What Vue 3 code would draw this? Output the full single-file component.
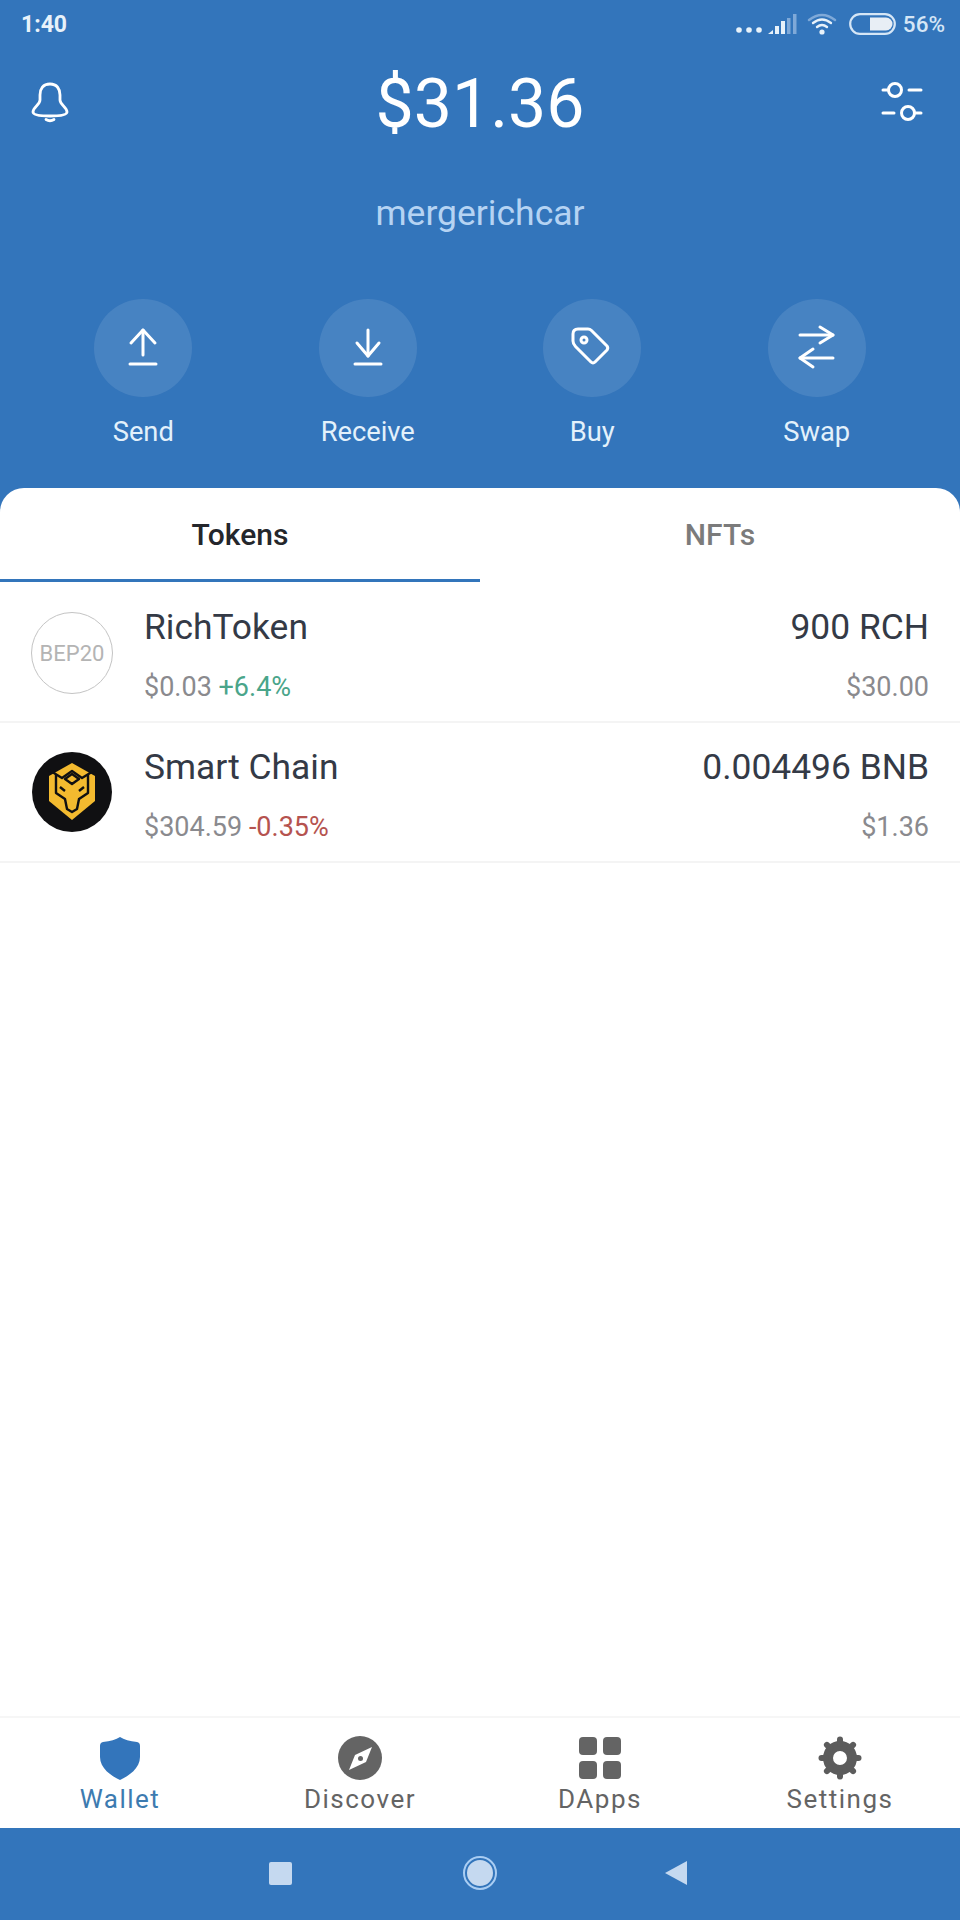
<template>
  <div class="screen">
    <header class="head">
      <div class="status">
        <span class="time">1:40</span>
        <div class="status-right">
          <svg class="s-dots" width="26" height="6" viewBox="0 0 26 6"><circle cx="3" cy="3" r="2.8" /><circle cx="13" cy="3" r="2.8" /><circle cx="23" cy="3" r="2.8" /></svg>
          <svg class="s-signal" width="29" height="22" viewBox="0 0 29 22">
            <path d="M0 21 L5 17 V21Z" fill="#e8f2fa" />
            <rect x="7" y="13" width="4" height="8" fill="#e8f2fa" />
            <rect x="13" y="8" width="4" height="13" fill="#e8f2fa" />
            <rect x="19" y="5" width="3.5" height="16" fill="#7fa9d8" />
            <rect x="25" y="1" width="3.5" height="20" fill="#7fa9d8" />
          </svg>
          <svg class="s-wifi" width="30" height="22" viewBox="0 0 30 22" fill="none" stroke-linecap="round">
            <path d="M2 7 Q15 -3 28 7" stroke="#7fa9d8" stroke-width="2.4" />
            <path d="M6 10 Q15 3 24 10" stroke="#e8f2fa" stroke-width="2.4" />
            <path d="M10 14 Q15 10 20 14" stroke="#e8f2fa" stroke-width="2.4" />
            <circle cx="15" cy="19" r="2.6" fill="#e8f2fa" />
          </svg>
          <svg class="s-batt" width="47" height="22" viewBox="0 0 47 22">
            <rect x="1.2" y="1.2" width="44.6" height="19.6" rx="9.8" fill="none" stroke="#d5e6f6" stroke-width="2.2" />
            <path d="M21 4.5 H37 a6.5 6.5 0 0 1 0 13 H21Z" fill="#e8eef5" />
          </svg>
          <span class="pct">56%</span>
        </div>
      </div>

      <div class="top">
        <svg class="bell" width="44" height="44" viewBox="0 0 44 44" fill="none" stroke="#fff" stroke-width="2.8" stroke-linecap="round">
          <path d="M22 4 C15 4 12 9 12 15 V20 C12 25 5 27 5 32 C5 35 13 36 22 36 C31 36 39 35 39 32 C39 27 32 25 32 20 V15 C32 9 29 4 22 4Z" />
          <path d="M18 39.5 Q22 42 26 39.5" />
        </svg>
        <div class="balance">$31.36</div>
        <svg class="sliders" width="44" height="44" viewBox="0 0 44 44" fill="none" stroke="#fff" stroke-width="3" stroke-linecap="round">
          <circle cx="15" cy="12" r="6.5" />
          <path d="M3 12 H8 M29 12 H41" />
          <circle cx="28" cy="35" r="6.5" />
          <path d="M3 35 H14 M35 35 H41" />
        </svg>
      </div>

      <div class="wallet-name">mergerichcar</div>

      <div class="actions">
        <div v-for="a in actions" :key="a.label" class="action">
          <div class="circle">
            <svg width="48" height="48" viewBox="0 0 48 48" fill="none" stroke="#fff" stroke-width="3" stroke-linecap="round" stroke-linejoin="round">
              <path v-for="d in a.paths" :key="d" :d="d" />
              <circle v-if="a.dot" cx="16" cy="16" r="3" />
            </svg>
          </div>
          <span class="action-label">{{ a.label }}</span>
        </div>
      </div>
    </header>

    <main class="sheet">
      <div class="tabs">
        <div class="tab active">Tokens</div>
        <div class="tab">NFTs</div>
      </div>

      <div class="row">
        <div class="avatar bep">BEP20</div>
        <div class="info">
          <div class="name">RichToken</div>
          <div class="sub">$0.03 <span class="up">+6.4%</span></div>
        </div>
        <div class="amounts">
          <div class="name">900 RCH</div>
          <div class="sub">$30.00</div>
        </div>
      </div>

      <div class="row">
        <svg class="avatar" width="82" height="82" viewBox="0 0 82 82">
          <circle cx="41" cy="41" r="40" fill="#101012" />
          <polygon points="41,12 64,25 64,50 41,69 18,50 18,25" fill="#f3ba2f" />
          <g fill="none" stroke="#101012" stroke-width="2.400" stroke-linejoin="round">
            <path d="M18 19 L31 27 L41 20 L51 27 L64 19" />
            <polygon points="41,23 48,28 41,33 34,28" />
            <path d="M25 24 V42 L34 48 L36 58 L41 61 L46 58 L48 48 L57 42 V24" />
            <path d="M29 36 L34 40 M53 36 L48 40" />
          </g>
        </svg>
        <div class="info">
          <div class="name">Smart Chain</div>
          <div class="sub">$304.59 <span class="down">-0.35%</span></div>
        </div>
        <div class="amounts">
          <div class="name">0.004496 BNB</div>
          <div class="sub">$1.36</div>
        </div>
      </div>
    </main>

    <nav class="nav">
      <div class="nav-item current">
        <svg width="42" height="44" viewBox="0 0 42 44"><path d="M21 1 Q27 5 38 6 Q41 6.500 41 10 V21 C41 32 30 40 21 44 C12 40 1 32 1 21 V10 Q1 6.500 4 6 Q15 5 21 1Z" fill="#3375bb" /></svg>
        <span>Wallet</span>
      </div>
      <div class="nav-item">
        <svg width="44" height="44" viewBox="0 0 44 44">
          <circle cx="22" cy="22" r="22" fill="#646464" />
          <path d="M34 11 L28 26 L11 34 L17 19Z" fill="#fff" />
          <circle cx="22.500" cy="22.500" r="2.500" fill="#646464" />
        </svg>
        <span>Discover</span>
      </div>
      <div class="nav-item">
        <div class="dapps"><i></i><i></i><i></i><i></i></div>
        <span>DApps</span>
      </div>
      <div class="nav-item">
        <svg width="44" height="44" viewBox="0 0 44 44" fill="none" stroke="#5c5c5c">
          <circle cx="22" cy="22" r="12" stroke-width="10" />
          <line v-for="n in 8" :key="n" x1="22" y1="8" x2="22" y2="3.500" stroke-width="6" stroke-linecap="round" :transform="`rotate(${n * 45} 22 22)`" />
        </svg>
        <span>Settings</span>
      </div>
    </nav>

    <div class="sysbar">
      <div class="sys-square"></div>
      <div class="sys-circle"></div>
      <svg class="sys-back" width="24" height="26" viewBox="0 0 24 26"><path d="M23 1 V25 L1 13Z" fill="#c5d9f0" /></svg>
    </div>
  </div>
</template>

<script setup>
const actions = [
  { label: "Send", paths: ["M24 31 V6", "M12 19 L24 6 L36 19", "M11 40 H37"] },
  { label: "Receive", paths: ["M24 32 V6", "M13 19 L24 32 L35 19", "M11 40 H37"] },
  { label: "Buy", dot: true, paths: ["M10 5 H20 Q22 5 23.500 6.500 L39 22 Q40.500 24 39 26 L27 38 Q25 40 23 38 L7.500 22.500 Q5 20 5 17 V10 Q5 5 10 5Z"] },
  { label: "Swap", paths: ["M7 11 H40", "M27 3 L40 11 L27 19", "M40 34 H7", "M20 25 L7 34 L20 43"] },
]
</script>

<style>
html, body {
  margin: 0;
  background: #3375bb;
}
</style>

<style scoped>
.screen {
  width: 960px;
  height: 1920px;
  display: flex;
  flex-direction: column;
  background: #3375bb;
  font-family: Roboto, "Liberation Sans", sans-serif;
  overflow: hidden;
}

.head {
  height: 488px;
  flex: none;
  color: #fff;
}

.status {
  height: 48px;
  display: flex;
  justify-content: space-between;
  align-items: center;
  padding: 0 15px 0 21px;
  color: #e8f2fa;
}

.time {
  font-size: 23px;
  font-weight: 700;
}

.status-right {
  display: flex;
  align-items: center;
}

.s-dots {
  fill: #e8f2fa;
  margin-top: 12px;
}

.s-signal {
  margin-left: 6px;
}

.s-wifi {
  margin-left: 10px;
}

.s-batt {
  margin-left: 12px;
}

.pct {
  font-size: 22.500px;
  font-weight: 500;
  margin-left: 7px;
  color: #d5e6f6;
}

.top {
  height: 112px;
  display: grid;
  grid-template-columns: 1fr auto 1fr;
  align-items: center;
  padding: 0 36px;
}

.bell {
  margin-left: -8px;
  margin-bottom: 5px;
}

.sliders {
  justify-self: end;
  margin-bottom: 8px;
}

.balance {
  font-size: 68px;
  line-height: 80px;
}

.wallet-name {
  margin-top: 32px;
  text-align: center;
  font-size: 35.500px;
  line-height: 42px;
  color: #b5d3f3;
}

.actions {
  margin-top: 65px;
  padding: 0 31px;
  display: grid;
  grid-template-columns: repeat(4, 1fr);
}

.action {
  display: flex;
  flex-direction: column;
  align-items: center;
}

.circle {
  width: 98px;
  height: 98px;
  border-radius: 50%;
  background: rgba(255, 255, 255, 0.1);
  display: flex;
  align-items: center;
  justify-content: center;
}

.action-label {
  margin-top: 20px;
  font-size: 27.300px;
  line-height: 30px;
  color: #e3f1fb;
}

.sheet {
  flex: 1;
  background: #fff;
  border-radius: 24px 24px 0 0;
}

.tabs {
  display: flex;
  height: 94px;
  margin-bottom: 1px;
}

.tab {
  flex: 1;
  display: flex;
  align-items: center;
  justify-content: center;
  padding-top: 2px;
  box-sizing: border-box;
  border-bottom: 3px solid transparent;
  font-size: 30px;
  font-weight: 500;
  color: #7b7b7b;
}

.tab.active {
  color: #24262b;
  border-bottom-color: #3375bb;
}

.row {
  height: 140px;
  box-sizing: border-box;
  border-bottom: 2px solid #f4f4f4;
  display: flex;
  align-items: center;
  padding: 0 31px;
}

.avatar {
  width: 82px;
  height: 82px;
  flex: none;
}

.bep {
  box-sizing: border-box;
  border: 1px solid #c4c4c4;
  border-radius: 50%;
  display: flex;
  align-items: center;
  justify-content: center;
  margin-top: 2px;
  font-size: 22px;
  color: #b4b4b4;
}

.info {
  margin-left: 31px;
  flex: 1;
  padding-top: 5px;
}

.amounts {
  text-align: right;
  padding-top: 5px;
}

.name {
  font-size: 35.400px;
  line-height: 40px;
  color: #343a46;
}

.sub {
  margin-top: 25px;
  font-size: 27px;
  line-height: 30px;
  color: #8a8a8e;
}

.up {
  color: #4aa58a;
}

.down {
  color: #b5534f;
}

.nav {
  height: 112px;
  flex: none;
  box-sizing: border-box;
  background: #fff;
  border-top: 2px solid #f6f6f6;
  display: grid;
  grid-template-columns: repeat(4, 1fr);
}

.nav-item {
  display: flex;
  flex-direction: column;
  align-items: center;
  padding-top: 18px;
  font-size: 26px;
  line-height: 30px;
  letter-spacing: 1.5px;
  color: #646464;
}

.nav-item span {
  margin-top: 4px;
}

.nav-item.current {
  color: #3d7bb0;
}

.dapps {
  width: 44px;
  height: 44px;
  display: grid;
  grid-template-columns: 18px 18px;
  grid-template-rows: 18px 18px;
  gap: 6px;
  justify-content: center;
  align-content: center;
}

.dapps i {
  background: #646464;
  border-radius: 4px;
}

.sysbar {
  flex: none;
  height: 92px;
  box-sizing: border-box;
  display: flex;
  align-items: center;
  justify-content: center;
  gap: 170px;
  padding: 0 4px 2px 0;
}

.sys-square {
  width: 23px;
  height: 23px;
  border-radius: 2px;
  margin-right: 3px;
  background: #c5d9f0;
}

.sys-circle {
  width: 30px;
  height: 30px;
  box-sizing: border-box;
  border-radius: 50%;
  background: #c5d9f0;
  border: 2px solid #3375bb;
  outline: 2px solid #a9cdf3;
}

.sys-back {
  margin-left: -1px;
}
</style>
